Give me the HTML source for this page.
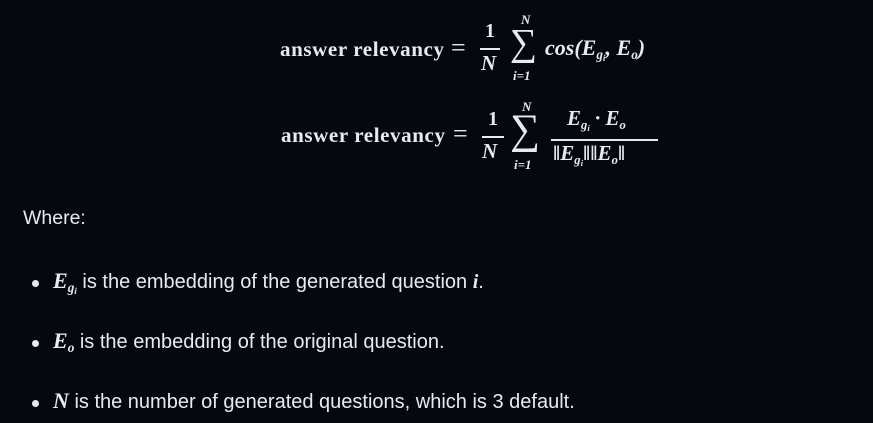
<!DOCTYPE html><html><head><style>
body{margin:0;width:873px;height:423px;background:#05080f;color:#e8eaf0;overflow:hidden;position:relative;font-family:"Liberation Sans",sans-serif}
.a{position:absolute;white-space:nowrap}
.s{font-family:"Liberation Serif",serif;font-weight:bold}
.m{font-family:"Liberation Serif",serif;font-style:italic;font-weight:bold}
.r{font-family:"Liberation Serif",serif}
.bar{position:absolute;height:1.5px;background:#e8eaf0}
.t{font-size:20px}
.dot{position:absolute;width:7px;height:7px;border-radius:50%;background:#e8eaf0}
.sb{font-size:0.6em;position:relative;top:0.3em;line-height:0}
.ssb{font-size:0.7em;position:relative;top:0.2em}
</style></head><body>
<!-- formula 1 -->
<div class="a s" style="left:280px;top:37px;font-size:21px;letter-spacing:0.6px">answer relevancy</div>
<div class="a r" style="left:451px;top:33px;font-size:26px">=</div>
<div class="a r" style="left:485px;top:20px;font-size:20px;font-weight:bold">1</div>
<div class="bar" style="left:480px;top:48px;width:20px"></div>
<div class="a m" style="left:481px;top:51px;font-size:21px">N</div>
<div class="a m" style="left:521px;top:12px;font-size:13px">N</div>
<div class="a r" style="left:510px;top:24px;font-size:38px;line-height:38px">∑</div>
<div class="a m" style="left:513px;top:68px;font-size:13px">i=1</div>
<div class="a m" style="left:545px;top:35px;font-size:22px">cos(E<span class="sb">g<span class="ssb">i</span></span>, E<span class="sb">o</span>)</div>
<!-- formula 2 -->
<div class="a s" style="left:281px;top:123px;font-size:21px;letter-spacing:0.6px">answer relevancy</div>
<div class="a r" style="left:453px;top:119px;font-size:26px">=</div>
<div class="a r" style="left:488px;top:108px;font-size:20px;font-weight:bold">1</div>
<div class="bar" style="left:482px;top:136px;width:22px"></div>
<div class="a m" style="left:482px;top:139px;font-size:21px">N</div>
<div class="a m" style="left:522px;top:99px;font-size:13px">N</div>
<div class="a r" style="left:510px;top:109px;font-size:42px;line-height:42px">∑</div>
<div class="a m" style="left:514px;top:157px;font-size:13px">i=1</div>
<div class="a m" style="left:567px;top:106px;font-size:21px">E<span class="sb">g<span class="ssb">i</span></span> · E<span class="sb">o</span></div>
<div class="bar" style="left:551px;top:139px;width:107px"></div>
<div class="a m" style="left:553px;top:141px;font-size:21px">‖E<span class="sb">g<span class="ssb">i</span></span>‖‖E<span class="sb">o</span>‖</div>
<!-- text -->
<div class="a" style="left:23px;top:207px;font-size:19.5px">Where:</div>
<div class="dot" style="left:32px;top:280px"></div>
<div class="a t" style="left:53px;top:268px"><span class="m" style="font-size:22px">E<span class="sb">g<span class="ssb">i</span></span></span> is the embedding of the generated question <span class="m">i</span>.</div>
<div class="dot" style="left:32px;top:340px"></div>
<div class="a t" style="left:53px;top:328px"><span class="m" style="font-size:22px">E<span class="sb">o</span></span> is the embedding of the original question.</div>
<div class="dot" style="left:32px;top:400px"></div>
<div class="a t" style="left:53px;top:388px"><span class="m" style="font-size:22px">N</span> is the number of generated questions, which is 3 default.</div>
</body></html>
